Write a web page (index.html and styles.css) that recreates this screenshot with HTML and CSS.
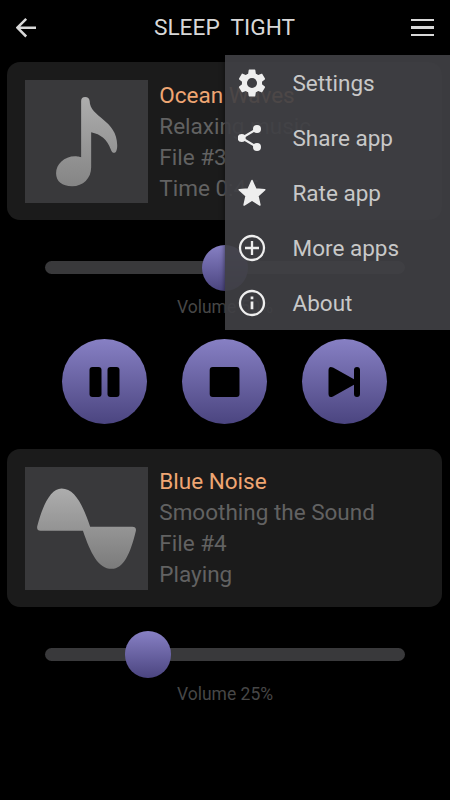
FILE: index.html
```html
<!DOCTYPE html>
<html lang="en">
<head>
<meta charset="utf-8">
<title>Sleep Tight</title>
<link rel="stylesheet" href="styles.css">
</head>
<body>
<header class="bar">
  <svg class="back" width="20" height="20" viewBox="0 0 20 20"><path d="M20 9.700H2M10.200 .900L1.400 9.700l8.800 8.800" fill="none" stroke="#d8d8d8" stroke-width="2.500"/></svg>
  <h1 class="title">SLEEP&nbsp; TIGHT</h1>
  <div class="burger"><i></i><i></i><i></i></div>
</header>
<main>
  <section class="card">
    <svg class="art" viewBox="0 0 123 123">
      <defs><linearGradient id="g1" x1="0" y1="0" x2="0" y2="1"><stop offset="0" stop-color="#adadad"/><stop offset="1" stop-color="#858585"/></linearGradient></defs>
      <path fill="url(#g1)" d="M56 77V21q0-4 4-4t4.500 4c0 16 27.500 19 27.500 44 0 10-5 9-6.500 4-3.500-10-10-15-19.500-17v35c0 11-8 19-19 19-10 0-16-5-16-13 0-9 8-17 19-17 3 0 6 1 6 1z"/>
    </svg>
    <div class="info"><p class="name">Ocean Waves</p><p>Relaxing music</p><p>File #3</p><p>Time 0:45</p></div>
  </section>
  <div class="slider"><div class="knob mid"></div></div>
  <p class="volume">Volume 50%</p>
  <div class="controls">
    <button class="round" aria-label="Pause"><svg viewBox="0 0 85 85"><rect x="27.500" y="28" width="12" height="30" rx="3"/><rect x="45.500" y="28" width="12" height="30" rx="3"/></svg></button>
    <button class="round" aria-label="Stop"><svg viewBox="0 0 85 85"><rect x="27.700" y="28" width="29.800" height="30" rx="3"/></svg></button>
    <button class="round" aria-label="Next"><svg viewBox="0 0 85 85"><path d="M26.500 31.500q0-5 4.500-3L52 40.300V31q0-3 3-3t3 3v24q0 3-3 3t-3-3v-9.300L31 57.500q-4.500 2-4.500-3z"/></svg></button>
  </div>
  <section class="card second">
    <svg class="art" viewBox="0 0 123 123">
      <defs><linearGradient id="g2" x1="0" y1="0" x2="0" y2="1"><stop offset="0" stop-color="#adadad"/><stop offset="1" stop-color="#7b7b7b"/></linearGradient></defs>
      <path fill="url(#g2)" d="M15.500 63.500q-4 0-3.300-4.500C18 37 26 21.500 36.500 21.500c13 0 21 16 28.500 38h42q4.500 0 3.500 4.500C105 87 98 101.500 86.500 101.500 73 101.500 65.500 86 57.800 63.500z"/>
    </svg>
    <div class="info"><p class="name">Blue Noise</p><p>Smoothing the Sound</p><p>File #4</p><p>Playing</p></div>
  </section>
  <div class="slider"><div class="knob quarter"></div></div>
  <p class="volume">Volume 25%</p>
</main>
<nav class="menu">
  <a class="item"><svg viewBox="0 0 24 24"><path transform="translate(12 12) scale(1.200) translate(-12 -12)" d="M19.140 12.940c.040-.300.060-.610.060-.940 0-.320-.020-.640-.070-.940l2.030-1.580c.180-.140.230-.410.120-.610l-1.920-3.320c-.120-.220-.370-.290-.590-.220l-2.390.960c-.500-.380-1.030-.700-1.620-.940l-.360-2.540c-.040-.240-.240-.410-.480-.410h-3.840c-.240 0-.430.170-.470.410l-.360 2.540c-.590.240-1.130.570-1.620.940l-2.390-.960c-.220-.080-.470 0-.590.220L2.740 8.870c-.120.210-.080.470.120.610l2.030 1.580c-.050.300-.090.630-.090.940s.020.640.070.940l-2.030 1.580c-.180.140-.230.410-.120.610l1.920 3.320c.120.220.370.290.590.220l2.390-.960c.500.380 1.030.700 1.620.940l.360 2.540c.050.240.240.410.480.410h3.840c.240 0 .440-.170.470-.410l.360-2.540c.590-.240 1.130-.560 1.620-.940l2.390.960c.220.080.470 0 .590-.220l1.920-3.320c.120-.220.070-.470-.120-.610zM12 15.600a3.600 3.600 0 1 1 0-7.200 3.600 3.600 0 0 1 0 7.200z"/></svg>Settings</a>
  <a class="item"><svg viewBox="0 0 28 28"><g><circle cx="3.700" cy="14" r="4"/><circle cx="19" cy="5" r="4"/><circle cx="19" cy="23" r="4"/><path d="M19 5L3.700 14 19 23" fill="none" stroke="#eee" stroke-width="2.200"/></g></svg>Share app</a>
  <a class="item"><svg viewBox="0 0 28 28"><path stroke="#eee" stroke-width="1.500" stroke-linejoin="round" d="M14 1.500l3.700 8.400 9.100.900-6.900 6.100 2 9.100-7.900-4.800-7.900 4.800 2-9.100-6.900-6.100 9.100-.900z"/></svg>Rate app</a>
  <a class="item"><svg viewBox="0 0 28 28"><g fill="none" stroke="#eee" stroke-width="2.300"><circle cx="14" cy="14" r="12"/><path d="M14 7v14M7 14h14"/></g></svg>More apps</a>
  <a class="item"><svg viewBox="0 0 28 28"><g fill="none" stroke="#eee" stroke-width="2.300"><circle cx="14" cy="14" r="12"/><path stroke-width="2.700" d="M14 12.500v7.800M14 7.400v2.800"/></g></svg>About</a>
</nav>
</body>
</html>
```

FILE: styles.css
```css
* { box-sizing: border-box; }
body { margin: 0; width: 450px; height: 800px; overflow: hidden; position: relative; background: #000; font-family: Roboto, "Liberation Sans", sans-serif; }
p, h1 { margin: 0; font-weight: 400; }
.bar { height: 55px; padding: 0 16px; display: flex; align-items: center; justify-content: space-between; }
.title { padding-left: 2px; font-size: 22.700px; line-height: 28px; color: #d8d8d8; white-space: nowrap; }
.burger { width: 23px; display: flex; flex-direction: column; gap: 5px; }
.burger i { height: 2.600px; background: #d8d8d8; }
.card { margin: 7.400px 7.600px 0 7.400px; height: 158px; border-radius: 13px; background: #1b1b1b; padding: 17.600px; display: flex; gap: 11px; }
.art { width: 123.300px; height: 123.300px; background: #39393b; flex: none; }
.info { margin-top: -.300px; font-size: 22.500px; line-height: 31px; color: #626262; white-space: nowrap; }
.info .name { color: #efa673; }
.slider { width: 360px; height: 13px; margin: 41px auto 0; border-radius: 7px; background: #39393b; display: flex; align-items: center; }
.knob { width: 46.500px; height: 46.500px; border-radius: 50%; background: linear-gradient(#8780c4, #4b4580); flex: none; }
.mid { margin-left: 156.700px; }
.quarter { margin-left: 79.700px; }
.volume { margin-top: 21.600px; font-size: 17.500px; line-height: 22px; text-align: center; color: #474747; }
.controls { margin-top: 21px; display: flex; justify-content: center; gap: 35px; padding-right: 1px; }
.round { width: 85px; height: 85px; padding: 0; border: 0; border-radius: 50%; background: linear-gradient(#8780c4, #4b4580); }
.round svg { display: block; width: 85px; height: 85px; }
.second { margin-top: 25.200px; }
.menu { position: absolute; top: 55px; right: 0; width: 225px; height: 275px; background: rgba(64, 63, 68, .93); box-shadow: 0 0 5px rgba(0, 0, 0, .6); }
.item { height: 55px; padding-left: 13px; display: flex; align-items: center; gap: 26.500px; font-size: 22.500px; line-height: 28px; color: #c8c8c8; }
.item svg { width: 28px; height: 28px; fill: #eee; }
```
